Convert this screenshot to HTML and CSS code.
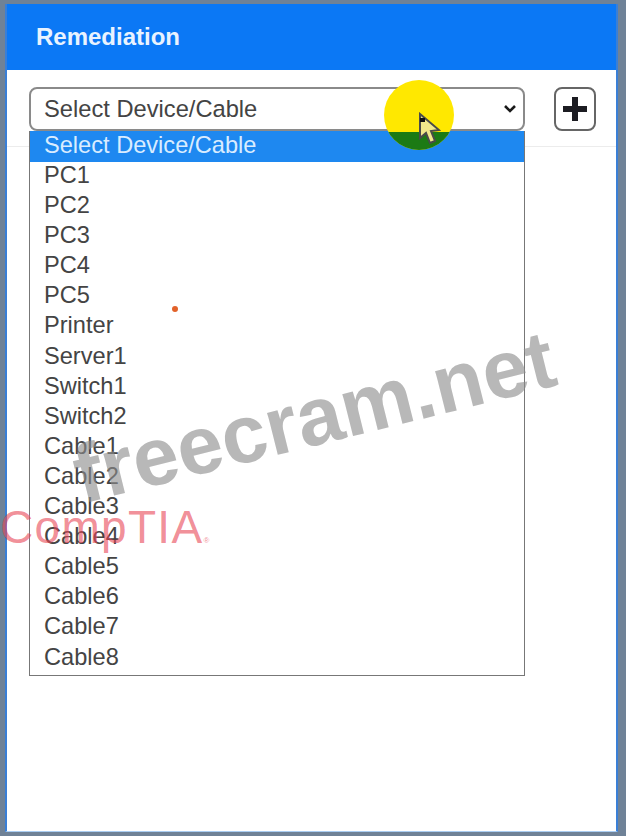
FILE: index.html
```html
<!DOCTYPE html>
<html lang="en">
<head>
    <meta charset="UTF-8">
    <meta name="viewport" content="width=device-width, initial-scale=1.0">
    <title>Remediation</title>
    <link rel="stylesheet" href="styles.css">
</head>
<body>
    <div class="panel">
        <div class="panel-head">Remediation</div>
        <div class="toolbar">
            <div class="selectBox">
                <div class="selectValue">
                    <span>Select Device/Cable</span>
                    <svg class="chevron" width="14" height="10" viewBox="0 0 14 10"><path d="M2 2l5 5 5-5" fill="none" stroke="#1a1a1a" stroke-width="2.6"/></svg>
                </div>
                <ul class="options">
                    <li class="active">Select Device/Cable</li>
                    <li>PC1</li>
                    <li>PC2</li>
                    <li>PC3</li>
                    <li>PC4</li>
                    <li>PC5</li>
                    <li>Printer</li>
                    <li>Server1</li>
                    <li>Switch1</li>
                    <li>Switch2</li>
                    <li>Cable1</li>
                    <li>Cable2</li>
                    <li>Cable3</li>
                    <li>Cable4</li>
                    <li>Cable5</li>
                    <li>Cable6</li>
                    <li>Cable7</li>
                    <li>Cable8</li>
                </ul>
            </div>
            <div class="addBtn">
                <svg width="26" height="26" viewBox="0 0 26 26"><path d="M13 1v24M1 13h24" fill="none" stroke="#1c1c22" stroke-width="6"/></svg>
            </div>
        </div>
    </div>

    <!-- overlays from the recording -->
    <div class="cursorSpot"><div class="spotGreen"></div></div>
    <svg class="pointer" width="24" height="34" viewBox="0 0 24 34"><path d="M3 2l0 24 6-5 4 10 5-2-4-10 8-1z" fill="#f2e88a" stroke="#4a4a4a" stroke-width="2"/><rect x="3" y="6" width="5" height="4" fill="#111"/></svg>
    <div class="redDot"></div>
    <div class="markSite">freecram.net</div>
    <div class="markBrand">CompTIA<span class="reg">®</span></div>
</body>
</html>
```

FILE: styles.css
```css
*{
    margin: 0;
    padding: 0;
    box-sizing: border-box;
}
html, body{
    height: 836px;
    overflow: hidden;
}
body{
    background-color: #6f8297;
    padding: 4px 8px 4px 5px;
    font-family: "Liberation Sans", Arial, sans-serif;
    position: relative;
}
.panel{
    height: 828px;
    background-color: #fff;
    border: 2px solid #3a7fd6;
    border-top: 0;
    border-bottom: 1px solid #a9cdf2;
}
.panel-head{
    height: 66px;
    background-color: #0b78f5;
    color: #e9f3ff;
    font-size: 24px;
    font-weight: bold;
    padding: 20px 0 0 29px;
    line-height: 26px;
}
.toolbar{
    display: flex;
    align-items: flex-start;
    gap: 29px;
    height: 77px;
    padding: 17px 0 0 22px;
    border-bottom: 1px solid #ececec;
}
.selectBox{
    position: relative;
    width: 496px;
}
.selectValue{
    display: flex;
    align-items: center;
    justify-content: space-between;
    height: 44px;
    padding: 0 6px 0 13px;
    border: 2px solid #8a8a8a;
    border-radius: 8px;
    color: #444;
    font-size: 23.7px;
}
.options{
    position: absolute;
    top: 44px;
    left: 0;
    width: 496px;
    height: 545px;
    list-style: none;
    background-color: #fff;
    border: 1px solid #777;
    border-top: 0;
    color: #444;
    font-size: 23.6px;
}
.options li{
    height: 30.1px;
    line-height: 26px;
    padding-left: 14px;
}
.options .active{
    height: 31px;
    line-height: 28px;
    background-color: #1e88f0;
    color: #d9ecff;
}
.addBtn{
    width: 42px;
    height: 44px;
    border: 2px solid #666;
    border-radius: 8px;
    display: flex;
    align-items: center;
    justify-content: center;
}
.cursorSpot{
    position: absolute;
    left: 384px;
    top: 80px;
    width: 70px;
    height: 70px;
    border-radius: 50%;
    background-color: #ffe800;
    overflow: hidden;
}
.spotGreen{
    margin-top: 52px;
    height: 18px;
    background-color: #1c7a14;
}
.pointer{
    position: absolute;
    left: 417px;
    top: 112px;
}
.redDot{
    position: absolute;
    left: 172px;
    top: 306px;
    width: 6px;
    height: 6px;
    border-radius: 50%;
    background-color: #e2622a;
}
.markSite{
    position: absolute;
    left: 68px;
    top: 367px;
    font-size: 82px;
    font-weight: bold;
    line-height: 100px;
    color: rgba(140, 140, 140, 0.62);
    transform: rotate(-14deg);
    white-space: nowrap;
}
.markBrand{
    position: absolute;
    left: 0;
    top: 497px;
    font-size: 46px;
    line-height: 60px;
    letter-spacing: 1.3px;
    color: rgba(232, 70, 85, 0.62);
    white-space: nowrap;
}
.reg{
    font-size: 8px;
    letter-spacing: 0;
}
```
